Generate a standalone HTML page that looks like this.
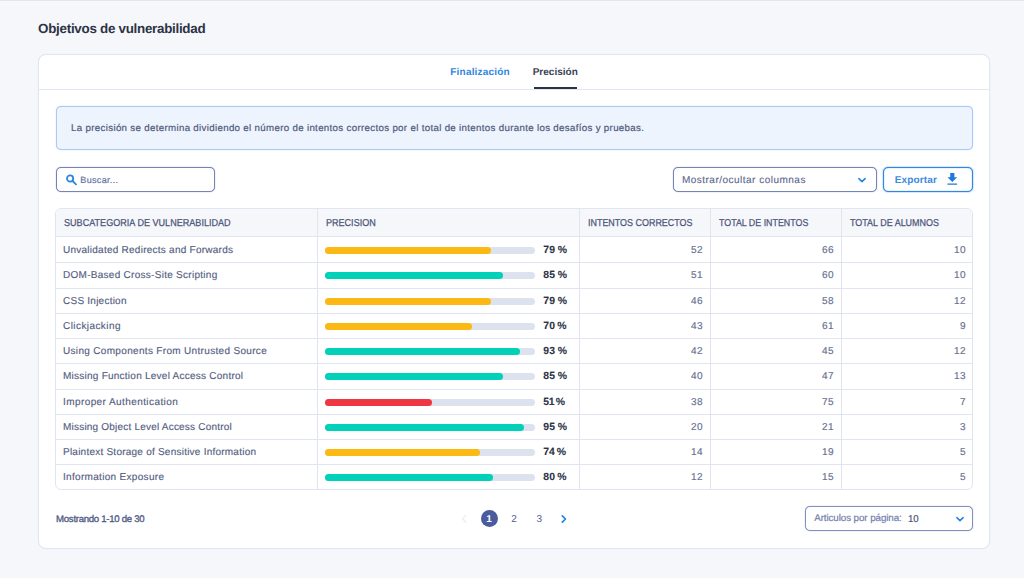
<!DOCTYPE html>
<html lang="es">
<head>
<meta charset="utf-8">
<title>Objetivos de vulnerabilidad</title>
<style>
*{box-sizing:border-box;margin:0;padding:0}
html,body{width:1024px;height:578px;overflow:hidden}
body{background:#f6f7fb;font-family:"Liberation Sans",sans-serif;position:relative;text-rendering:geometricPrecision}
main,section,nav,.alert,.toolbar,.search,.select,.btn,.table,.tr,.footer{display:contents}
.b{position:absolute;display:block}
.t{position:absolute;white-space:nowrap;display:block}
</style>
</head>
<body>
<div class="b" style="left:0;top:0;width:1024px;height:1px;background:#e4e5ea"></div>
<main>
<h1 class="t" style="top:20.02px;font-size:13.4px;line-height:17px;color:#2c3345;font-weight:bold;left:38.10px;letter-spacing:-0.284px;">Objetivos de vulnerabilidad</h1>
<section class="card">
<div class="b" style="left:38px;top:54px;width:952px;height:495px;background:#fff;border:1px solid #e2e6f2;border-radius:8px;box-shadow:0 0 1px #e2e6f2"></div>
<nav class="tabs" role="tablist">
<div class="b" style="left:39px;top:89px;width:950px;height:1px;background:#e2e6f2"></div>
<span class="t" role="tab" style="top:66.02px;font-size:10px;line-height:13px;color:#2f86e0;font-weight:bold;left:450.30px;letter-spacing:0.197px;">Finalización</span>
<span class="t" role="tab" aria-selected="true" style="top:66.02px;font-size:10px;line-height:13px;color:#3a4256;font-weight:bold;left:532.70px;letter-spacing:0.009px;">Precisión</span>
<div class="b" style="left:533.8px;top:87px;width:43px;height:2px;background:#2c3345"></div>
</nav>
<div class="alert" role="note">
<div class="b" style="left:56px;top:106px;width:917px;height:44px;background:#eef4fe;border:1px solid #a6c9f8;border-radius:5px;box-shadow:0 0 1px #a6c9f8"></div>
<p class="t" style="top:122.02px;font-size:9.7px;line-height:13px;color:#4f5a7c;font-weight:normal;-webkit-text-stroke:0.2px;left:71.10px;letter-spacing:0.333px;">La precisión se determina dividiendo el número de intentos correctos por el total de intentos durante los desafíos y pruebas.</p>
</div>
<div class="toolbar">
<div class="search">
<div class="b" style="left:55.5px;top:167px;width:159px;height:25px;background:#fff;border:1px solid #7583b7;border-radius:5px;box-shadow:0 0 1px #7583b7"></div>
<svg class="b" style="left:65.2px;top:174.1px" width="13" height="13" viewBox="0 0 13 13"><circle cx="5.1" cy="4.5" r="3.1" fill="none" stroke="#2b86e2" stroke-width="1.8"/><path d="M7.5 7L11 10.3" stroke="#2b86e2" stroke-width="1.8" stroke-linecap="round"/></svg>
<span class="t" style="top:174.02px;font-size:9px;line-height:12px;color:#6372a5;font-weight:normal;-webkit-text-stroke:0.2px;left:80.30px;letter-spacing:0.336px;">Buscar...</span>
</div>
<div class="select">
<div class="b" style="left:672.5px;top:167px;width:204px;height:25px;background:#fff;border:1px solid #7583b7;border-radius:5px;box-shadow:0 0 1px #7583b7"></div>
<span class="t" style="top:174.02px;font-size:10px;line-height:13px;color:#59648b;font-weight:normal;-webkit-text-stroke:0.1px;left:681.90px;letter-spacing:0.488px;">Mostrar/ocultar columnas</span>
<svg class="b" style="left:856.5px;top:176.5px" width="10" height="7" viewBox="0 0 10 7"><path d="M1.9 1.6L5 4.6L8.1 1.6" fill="none" stroke="#2a84e2" stroke-width="1.6" stroke-linecap="round" stroke-linejoin="round"/></svg>
</div>
<div class="btn" role="button">
<div class="b" style="left:882.5px;top:167px;width:90px;height:25px;background:#fff;border:1px solid #2f86e4;border-radius:5px;box-shadow:0 0 1.5px #2f86e4,inset 0 0 1px #2f86e4"></div>
<span class="t" style="top:174.02px;font-size:10px;line-height:13px;color:#3a8ae0;font-weight:bold;left:894.80px;letter-spacing:0.125px;">Exportar</span>
<svg class="b" style="left:943.85px;top:171.1px" width="16.6" height="16.6" viewBox="0 0 24 24"><path d="M19 9h-4V3H9v6H5l7 7 7-7zM5 18v2h14v-2H5z" fill="#1f78dc"/></svg>
</div>
</div>
<div class="table" role="table">
<div class="b" style="left:55px;top:208px;width:918px;height:282px;background:#fff;border:1px solid #e1e5f1;border-radius:6px"></div>
<div class="b" style="left:56px;top:209px;width:916px;height:27.5px;background:#f6f7fb;border-radius:5px 5px 0 0"></div>
<div class="b" style="left:317px;top:209px;width:1px;height:280.5px;background:#e1e5f1"></div>
<div class="b" style="left:579px;top:209px;width:1px;height:280.5px;background:#e1e5f1"></div>
<div class="b" style="left:710px;top:209px;width:1px;height:280.5px;background:#e1e5f1"></div>
<div class="b" style="left:841px;top:209px;width:1px;height:280.5px;background:#e1e5f1"></div>
<div class="tr" role="row">
<span class="t" role="columnheader" style="top:217.02px;font-size:10px;line-height:13px;color:#4b5577;font-weight:normal;-webkit-text-stroke:0.25px;left:64.20px;transform:scaleX(0.9067);transform-origin:0 0;">SUBCATEGORIA DE VULNERABILIDAD</span>
<span class="t" role="columnheader" style="top:217.02px;font-size:10px;line-height:13px;color:#4b5577;font-weight:normal;-webkit-text-stroke:0.25px;left:326.25px;transform:scaleX(0.9043);transform-origin:0 0;">PRECISION</span>
<span class="t" role="columnheader" style="top:217.02px;font-size:10px;line-height:13px;color:#4b5577;font-weight:normal;-webkit-text-stroke:0.25px;left:588.00px;transform:scaleX(0.8941);transform-origin:0 0;">INTENTOS CORRECTOS</span>
<span class="t" role="columnheader" style="top:217.02px;font-size:10px;line-height:13px;color:#4b5577;font-weight:normal;-webkit-text-stroke:0.25px;left:719.10px;transform:scaleX(0.8862);transform-origin:0 0;">TOTAL DE INTENTOS</span>
<span class="t" role="columnheader" style="top:217.02px;font-size:10px;line-height:13px;color:#4b5577;font-weight:normal;-webkit-text-stroke:0.25px;left:849.90px;transform:scaleX(0.8963);transform-origin:0 0;">TOTAL DE ALUMNOS</span>
</div>
<div class="tr" role="row">
<div class="b" style="left:56px;top:236px;width:916px;height:1px;background:#e1e5f1"></div>
<span class="t" role="cell" style="top:244.02px;font-size:10px;line-height:13px;color:#545e80;font-weight:normal;-webkit-text-stroke:0.15px;left:63.00px;letter-spacing:0.250px;">Unvalidated Redirects and Forwards</span>
<div class="b" style="left:324.6px;top:247px;width:210.2px;height:7px;background:#dde2ef;border-radius:3.5px"></div>
<div class="b" style="left:324.6px;top:247px;width:166.058px;height:7px;background:#fdb913;border-radius:3.5px"></div>
<span class="t" role="cell" style="top:244.02px;font-size:10.4px;line-height:14px;color:#2c3345;font-weight:bold;-webkit-text-stroke:0.1px;left:543.25px;letter-spacing:0.300px;word-spacing:-0.837px;">79 %</span>
<span class="t" role="cell" style="top:244.02px;font-size:10px;line-height:13px;color:#667090;font-weight:normal;-webkit-text-stroke:0.15px;right:321.50px;letter-spacing:0.500px;margin-right:-0.500px;">52</span>
<span class="t" role="cell" style="top:244.02px;font-size:10px;line-height:13px;color:#667090;font-weight:normal;-webkit-text-stroke:0.15px;right:190.50px;letter-spacing:0.500px;margin-right:-0.500px;">66</span>
<span class="t" role="cell" style="top:244.02px;font-size:10px;line-height:13px;color:#667090;font-weight:normal;-webkit-text-stroke:0.15px;right:58.50px;letter-spacing:0.500px;margin-right:-0.500px;">10</span>
</div>
<div class="tr" role="row">
<div class="b" style="left:56px;top:262px;width:916px;height:1px;background:#e1e5f1"></div>
<span class="t" role="cell" style="top:269.02px;font-size:10px;line-height:13px;color:#545e80;font-weight:normal;-webkit-text-stroke:0.15px;left:63.00px;letter-spacing:0.279px;">DOM-Based Cross-Site Scripting</span>
<div class="b" style="left:324.6px;top:272px;width:210.2px;height:7px;background:#dde2ef;border-radius:3.5px"></div>
<div class="b" style="left:324.6px;top:272px;width:178.67px;height:7px;background:#00d1b8;border-radius:3.5px"></div>
<span class="t" role="cell" style="top:269.02px;font-size:10.4px;line-height:14px;color:#2c3345;font-weight:bold;-webkit-text-stroke:0.1px;left:543.25px;letter-spacing:0.300px;word-spacing:-0.837px;">85 %</span>
<span class="t" role="cell" style="top:269.02px;font-size:10px;line-height:13px;color:#667090;font-weight:normal;-webkit-text-stroke:0.15px;right:321.50px;letter-spacing:0.500px;margin-right:-0.500px;">51</span>
<span class="t" role="cell" style="top:269.02px;font-size:10px;line-height:13px;color:#667090;font-weight:normal;-webkit-text-stroke:0.15px;right:190.50px;letter-spacing:0.500px;margin-right:-0.500px;">60</span>
<span class="t" role="cell" style="top:269.02px;font-size:10px;line-height:13px;color:#667090;font-weight:normal;-webkit-text-stroke:0.15px;right:58.50px;letter-spacing:0.500px;margin-right:-0.500px;">10</span>
</div>
<div class="tr" role="row">
<div class="b" style="left:56px;top:288px;width:916px;height:1px;background:#e1e5f1"></div>
<span class="t" role="cell" style="top:295.02px;font-size:10px;line-height:13px;color:#545e80;font-weight:normal;-webkit-text-stroke:0.15px;left:63.00px;letter-spacing:0.242px;">CSS Injection</span>
<div class="b" style="left:324.6px;top:298px;width:210.2px;height:7px;background:#dde2ef;border-radius:3.5px"></div>
<div class="b" style="left:324.6px;top:298px;width:166.058px;height:7px;background:#fdb913;border-radius:3.5px"></div>
<span class="t" role="cell" style="top:295.02px;font-size:10.4px;line-height:14px;color:#2c3345;font-weight:bold;-webkit-text-stroke:0.1px;left:543.25px;letter-spacing:0.300px;word-spacing:-0.837px;">79 %</span>
<span class="t" role="cell" style="top:295.02px;font-size:10px;line-height:13px;color:#667090;font-weight:normal;-webkit-text-stroke:0.15px;right:321.50px;letter-spacing:0.500px;margin-right:-0.500px;">46</span>
<span class="t" role="cell" style="top:295.02px;font-size:10px;line-height:13px;color:#667090;font-weight:normal;-webkit-text-stroke:0.15px;right:190.50px;letter-spacing:0.500px;margin-right:-0.500px;">58</span>
<span class="t" role="cell" style="top:295.02px;font-size:10px;line-height:13px;color:#667090;font-weight:normal;-webkit-text-stroke:0.15px;right:58.50px;letter-spacing:0.500px;margin-right:-0.500px;">12</span>
</div>
<div class="tr" role="row">
<div class="b" style="left:56px;top:313px;width:916px;height:1px;background:#e1e5f1"></div>
<span class="t" role="cell" style="top:320.02px;font-size:10px;line-height:13px;color:#545e80;font-weight:normal;-webkit-text-stroke:0.15px;left:63.00px;letter-spacing:0.428px;">Clickjacking</span>
<div class="b" style="left:324.6px;top:323px;width:210.2px;height:7px;background:#dde2ef;border-radius:3.5px"></div>
<div class="b" style="left:324.6px;top:323px;width:147.14px;height:7px;background:#fdb913;border-radius:3.5px"></div>
<span class="t" role="cell" style="top:320.02px;font-size:10.4px;line-height:14px;color:#2c3345;font-weight:bold;-webkit-text-stroke:0.1px;left:543.25px;letter-spacing:0.133px;word-spacing:-0.837px;">70 %</span>
<span class="t" role="cell" style="top:320.02px;font-size:10px;line-height:13px;color:#667090;font-weight:normal;-webkit-text-stroke:0.15px;right:321.50px;letter-spacing:0.500px;margin-right:-0.500px;">43</span>
<span class="t" role="cell" style="top:320.02px;font-size:10px;line-height:13px;color:#667090;font-weight:normal;-webkit-text-stroke:0.15px;right:190.50px;letter-spacing:0.500px;margin-right:-0.500px;">61</span>
<span class="t" role="cell" style="top:320.02px;font-size:10px;line-height:13px;color:#667090;font-weight:normal;-webkit-text-stroke:0.15px;right:58.50px;letter-spacing:0.500px;margin-right:-0.500px;">9</span>
</div>
<div class="tr" role="row">
<div class="b" style="left:56px;top:338px;width:916px;height:1px;background:#e1e5f1"></div>
<span class="t" role="cell" style="top:345.02px;font-size:10px;line-height:13px;color:#545e80;font-weight:normal;-webkit-text-stroke:0.15px;left:63.00px;letter-spacing:0.324px;">Using Components From Untrusted Source</span>
<div class="b" style="left:324.6px;top:348px;width:210.2px;height:7px;background:#dde2ef;border-radius:3.5px"></div>
<div class="b" style="left:324.6px;top:348px;width:195.486px;height:7px;background:#00d1b8;border-radius:3.5px"></div>
<span class="t" role="cell" style="top:345.02px;font-size:10.4px;line-height:14px;color:#2c3345;font-weight:bold;-webkit-text-stroke:0.1px;left:543.25px;letter-spacing:0.300px;word-spacing:-0.837px;">93 %</span>
<span class="t" role="cell" style="top:345.02px;font-size:10px;line-height:13px;color:#667090;font-weight:normal;-webkit-text-stroke:0.15px;right:321.50px;letter-spacing:0.500px;margin-right:-0.500px;">42</span>
<span class="t" role="cell" style="top:345.02px;font-size:10px;line-height:13px;color:#667090;font-weight:normal;-webkit-text-stroke:0.15px;right:190.50px;letter-spacing:0.500px;margin-right:-0.500px;">45</span>
<span class="t" role="cell" style="top:345.02px;font-size:10px;line-height:13px;color:#667090;font-weight:normal;-webkit-text-stroke:0.15px;right:58.50px;letter-spacing:0.500px;margin-right:-0.500px;">12</span>
</div>
<div class="tr" role="row">
<div class="b" style="left:56px;top:363px;width:916px;height:1px;background:#e1e5f1"></div>
<span class="t" role="cell" style="top:370.02px;font-size:10px;line-height:13px;color:#545e80;font-weight:normal;-webkit-text-stroke:0.15px;left:63.00px;letter-spacing:0.245px;">Missing Function Level Access Control</span>
<div class="b" style="left:324.6px;top:373px;width:210.2px;height:7px;background:#dde2ef;border-radius:3.5px"></div>
<div class="b" style="left:324.6px;top:373px;width:178.67px;height:7px;background:#00d1b8;border-radius:3.5px"></div>
<span class="t" role="cell" style="top:370.02px;font-size:10.4px;line-height:14px;color:#2c3345;font-weight:bold;-webkit-text-stroke:0.1px;left:543.25px;letter-spacing:0.300px;word-spacing:-0.837px;">85 %</span>
<span class="t" role="cell" style="top:370.02px;font-size:10px;line-height:13px;color:#667090;font-weight:normal;-webkit-text-stroke:0.15px;right:321.50px;letter-spacing:0.500px;margin-right:-0.500px;">40</span>
<span class="t" role="cell" style="top:370.02px;font-size:10px;line-height:13px;color:#667090;font-weight:normal;-webkit-text-stroke:0.15px;right:190.50px;letter-spacing:0.500px;margin-right:-0.500px;">47</span>
<span class="t" role="cell" style="top:370.02px;font-size:10px;line-height:13px;color:#667090;font-weight:normal;-webkit-text-stroke:0.15px;right:58.50px;letter-spacing:0.500px;margin-right:-0.500px;">13</span>
</div>
<div class="tr" role="row">
<div class="b" style="left:56px;top:389px;width:916px;height:1px;background:#e1e5f1"></div>
<span class="t" role="cell" style="top:396.02px;font-size:10px;line-height:13px;color:#545e80;font-weight:normal;-webkit-text-stroke:0.15px;left:63.00px;letter-spacing:0.415px;">Improper Authentication</span>
<div class="b" style="left:324.6px;top:399px;width:210.2px;height:7px;background:#dde2ef;border-radius:3.5px"></div>
<div class="b" style="left:324.6px;top:399px;width:107.202px;height:7px;background:#ee3742;border-radius:3.5px"></div>
<span class="t" role="cell" style="top:396.02px;font-size:10.4px;line-height:14px;color:#2c3345;font-weight:bold;-webkit-text-stroke:0.1px;left:543.25px;letter-spacing:-0.367px;word-spacing:-0.837px;">51 %</span>
<span class="t" role="cell" style="top:396.02px;font-size:10px;line-height:13px;color:#667090;font-weight:normal;-webkit-text-stroke:0.15px;right:321.50px;letter-spacing:0.500px;margin-right:-0.500px;">38</span>
<span class="t" role="cell" style="top:396.02px;font-size:10px;line-height:13px;color:#667090;font-weight:normal;-webkit-text-stroke:0.15px;right:190.50px;letter-spacing:0.500px;margin-right:-0.500px;">75</span>
<span class="t" role="cell" style="top:396.02px;font-size:10px;line-height:13px;color:#667090;font-weight:normal;-webkit-text-stroke:0.15px;right:58.50px;letter-spacing:0.500px;margin-right:-0.500px;">7</span>
</div>
<div class="tr" role="row">
<div class="b" style="left:56px;top:414px;width:916px;height:1px;background:#e1e5f1"></div>
<span class="t" role="cell" style="top:421.02px;font-size:10px;line-height:13px;color:#545e80;font-weight:normal;-webkit-text-stroke:0.15px;left:63.00px;letter-spacing:0.206px;">Missing Object Level Access Control</span>
<div class="b" style="left:324.6px;top:424px;width:210.2px;height:7px;background:#dde2ef;border-radius:3.5px"></div>
<div class="b" style="left:324.6px;top:424px;width:199.69px;height:7px;background:#00d1b8;border-radius:3.5px"></div>
<span class="t" role="cell" style="top:421.02px;font-size:10.4px;line-height:14px;color:#2c3345;font-weight:bold;-webkit-text-stroke:0.1px;left:543.25px;letter-spacing:0.300px;word-spacing:-0.837px;">95 %</span>
<span class="t" role="cell" style="top:421.02px;font-size:10px;line-height:13px;color:#667090;font-weight:normal;-webkit-text-stroke:0.15px;right:321.50px;letter-spacing:0.500px;margin-right:-0.500px;">20</span>
<span class="t" role="cell" style="top:421.02px;font-size:10px;line-height:13px;color:#667090;font-weight:normal;-webkit-text-stroke:0.15px;right:190.50px;letter-spacing:0.500px;margin-right:-0.500px;">21</span>
<span class="t" role="cell" style="top:421.02px;font-size:10px;line-height:13px;color:#667090;font-weight:normal;-webkit-text-stroke:0.15px;right:58.50px;letter-spacing:0.500px;margin-right:-0.500px;">3</span>
</div>
<div class="tr" role="row">
<div class="b" style="left:56px;top:439px;width:916px;height:1px;background:#e1e5f1"></div>
<span class="t" role="cell" style="top:446.02px;font-size:10px;line-height:13px;color:#545e80;font-weight:normal;-webkit-text-stroke:0.15px;left:63.00px;letter-spacing:0.233px;">Plaintext Storage of Sensitive Information</span>
<div class="b" style="left:324.6px;top:449px;width:210.2px;height:7px;background:#dde2ef;border-radius:3.5px"></div>
<div class="b" style="left:324.6px;top:449px;width:155.548px;height:7px;background:#fdb913;border-radius:3.5px"></div>
<span class="t" role="cell" style="top:446.02px;font-size:10.4px;line-height:14px;color:#2c3345;font-weight:bold;-webkit-text-stroke:0.1px;left:543.25px;letter-spacing:-0.033px;word-spacing:-0.837px;">74 %</span>
<span class="t" role="cell" style="top:446.02px;font-size:10px;line-height:13px;color:#667090;font-weight:normal;-webkit-text-stroke:0.15px;right:321.50px;letter-spacing:0.500px;margin-right:-0.500px;">14</span>
<span class="t" role="cell" style="top:446.02px;font-size:10px;line-height:13px;color:#667090;font-weight:normal;-webkit-text-stroke:0.15px;right:190.50px;letter-spacing:0.500px;margin-right:-0.500px;">19</span>
<span class="t" role="cell" style="top:446.02px;font-size:10px;line-height:13px;color:#667090;font-weight:normal;-webkit-text-stroke:0.15px;right:58.50px;letter-spacing:0.500px;margin-right:-0.500px;">5</span>
</div>
<div class="tr" role="row">
<div class="b" style="left:56px;top:464px;width:916px;height:1px;background:#e1e5f1"></div>
<span class="t" role="cell" style="top:471.02px;font-size:10px;line-height:13px;color:#545e80;font-weight:normal;-webkit-text-stroke:0.15px;left:63.00px;letter-spacing:0.312px;">Information Exposure</span>
<div class="b" style="left:324.6px;top:474px;width:210.2px;height:7px;background:#dde2ef;border-radius:3.5px"></div>
<div class="b" style="left:324.6px;top:474px;width:168.16px;height:7px;background:#00d1b8;border-radius:3.5px"></div>
<span class="t" role="cell" style="top:471.02px;font-size:10.4px;line-height:14px;color:#2c3345;font-weight:bold;-webkit-text-stroke:0.1px;left:543.25px;letter-spacing:0.133px;word-spacing:-0.837px;">80 %</span>
<span class="t" role="cell" style="top:471.02px;font-size:10px;line-height:13px;color:#667090;font-weight:normal;-webkit-text-stroke:0.15px;right:321.50px;letter-spacing:0.500px;margin-right:-0.500px;">12</span>
<span class="t" role="cell" style="top:471.02px;font-size:10px;line-height:13px;color:#667090;font-weight:normal;-webkit-text-stroke:0.15px;right:190.50px;letter-spacing:0.500px;margin-right:-0.500px;">15</span>
<span class="t" role="cell" style="top:471.02px;font-size:10px;line-height:13px;color:#667090;font-weight:normal;-webkit-text-stroke:0.15px;right:58.50px;letter-spacing:0.500px;margin-right:-0.500px;">5</span>
</div>
</div>
<div class="footer">
<span class="t" style="top:514.02px;font-size:9.6px;line-height:12px;color:#525d85;font-weight:normal;-webkit-text-stroke:0.35px;left:56.10px;letter-spacing:-0.278px;">Mostrando 1-10 de 30</span>
<nav class="pagination">
<svg class="b" style="left:460.6px;top:514px" width="7" height="10" viewBox="0 0 7 10"><path d="M4.9 1.4L1.6 4.8L4.9 8.2" fill="none" stroke="#eceef5" stroke-width="1.3" stroke-linecap="round" stroke-linejoin="round"/></svg>
<div class="b" style="left:480.5px;top:510px;width:17.2px;height:17.2px;background:#4a5b9f;border-radius:50%"></div>
<span class="t" style="top:513.02px;font-size:10px;line-height:13px;color:#ffffff;font-weight:bold;left:480.5px;width:17px;text-align:center;">1</span>
<span class="t" style="top:513.02px;font-size:10px;line-height:13px;color:#55608c;font-weight:normal;left:511.20px;letter-spacing:0.000px;">2</span>
<span class="t" style="top:513.02px;font-size:10px;line-height:13px;color:#55608c;font-weight:normal;left:536.40px;letter-spacing:0.000px;">3</span>
<svg class="b" style="left:560.2px;top:513.8px" width="8" height="10" viewBox="0 0 8 10"><path d="M2.3 1.8L5.5 5L2.3 8.2" fill="none" stroke="#2384e4" stroke-width="1.7" stroke-linecap="round" stroke-linejoin="round"/></svg>
</nav>
<div class="select">
<div class="b" style="left:804.5px;top:506px;width:168px;height:25px;background:#fff;border:1px solid #8290be;border-radius:5px;box-shadow:0 0 1px #8290be"></div>
<span class="t" style="top:512.02px;font-size:9.8px;line-height:13px;color:#7480ad;font-weight:normal;-webkit-text-stroke:0.2px;left:814.20px;letter-spacing:-0.086px;">Articulos por página:</span>
<span class="t" style="top:513.02px;font-size:10px;line-height:13px;color:#4a5578;font-weight:normal;-webkit-text-stroke:0.2px;left:907.90px;transform:scaleX(0.9618);transform-origin:0 0;">10</span>
<svg class="b" style="left:954.5px;top:515.5px" width="10" height="7" viewBox="0 0 10 7"><path d="M1.9 1.6L5 4.6L8.1 1.6" fill="none" stroke="#2a84e2" stroke-width="1.6" stroke-linecap="round" stroke-linejoin="round"/></svg>
</div>
</div>
</section>
</main>
</body>
</html>
